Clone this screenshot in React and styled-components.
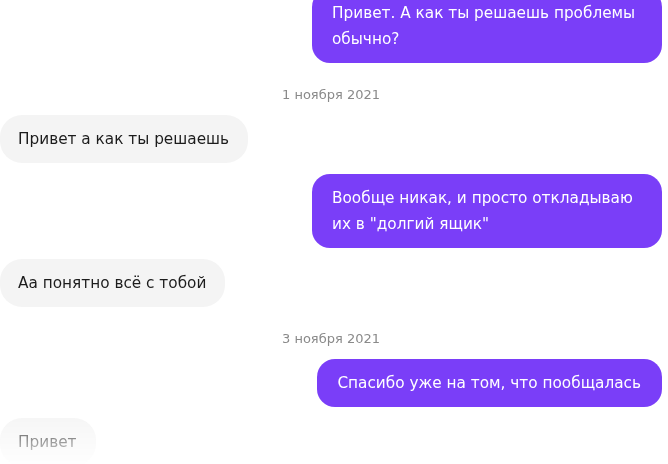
import React from "react";
import styled, { createGlobalStyle } from "styled-components";

const Global = createGlobalStyle`
  html, body {
    margin: 0;
    padding: 0;
    background: #ffffff;
    height: 464px;
    overflow: hidden;
  }
  body {
    font-family: "DejaVu Sans", "Liberation Sans", sans-serif;
  }
`;

const messages = [
  { type: "out", text: "Привет. А как ты решаешь проблемы обычно?" },
  { type: "date", text: "1 ноября 2021" },
  { type: "in", text: "Привет а как ты решаешь" },
  { type: "out", text: 'Вообще никак, и просто откладываю их в "долгий ящик"' },
  { type: "in", text: "Аа понятно всё с тобой" },
  { type: "date", text: "3 ноября 2021" },
  { type: "out", text: "Спасибо уже на том, что пообщалась", narrow: true },
  { type: "in", text: "Привет" },
];

const App = () => {
  return (
    <>
      <Global />
      <ChatWindow>
        <MessageList>
          {messages.map((m, i) => {
            if (m.type === "date") return <DateLabel key={i}>{m.text}</DateLabel>;
            return (
              <Row key={i} $out={m.type === "out"}>
                <Bubble $out={m.type === "out"} $narrow={m.narrow}>
                  {m.text}
                </Bubble>
              </Row>
            );
          })}
        </MessageList>
      </ChatWindow>
    </>
  );
};

export default App;

const ChatWindow = styled.div`
  width: 668px;
  height: 464px;
  overflow: hidden;
  -webkit-mask-image: linear-gradient(to bottom, #000 0, #000 408px, rgba(0, 0, 0, 0.08) 464px);
  mask-image: linear-gradient(to bottom, #000 0, #000 408px, rgba(0, 0, 0, 0.08) 464px);
`;

const MessageList = styled.div`
  display: flex;
  flex-direction: column;
  gap: 11px;
  margin-top: -11px;
  padding-right: 6px;
`;

const Row = styled.div`
  display: flex;
  justify-content: ${(p) => (p.$out ? "flex-end" : "flex-start")};
`;

const Bubble = styled.div`
  box-sizing: border-box;
  max-width: 350px;
  padding: 11px ${(p) => (p.$out ? "21px" : "19px")} 11px
    ${(p) => (p.$out ? "20px" : "18px")};
  font-size: 15.3px;
  line-height: 26px;
  border-radius: ${(p) => (p.$out ? "18px" : "22px")};
  background: ${(p) => (p.$out ? "#7a3ef8" : "#f4f4f4")};
  color: ${(p) => (p.$out ? "#ffffff" : "#1c1c1c")};
  width: ${(p) => (p.$out && !p.$narrow ? "350px" : "auto")};
`;

const DateLabel = styled.div`
  padding-top: 12px;
  height: 18px;
  line-height: 18px;
  text-align: center;
  font-size: 13px;
  color: #8a8a8a;
`;
